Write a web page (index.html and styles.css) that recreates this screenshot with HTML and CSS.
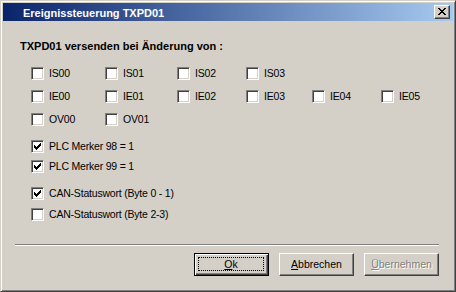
FILE: index.html
```html
<!DOCTYPE html>
<html lang="de">
<head>
<meta charset="utf-8">
<title>Ereignissteuerung TXPD01</title>
<link rel="stylesheet" href="styles.css">
</head>
<body>
<div class="window">
  <div class="titlebar">
    <span class="title">Ereignissteuerung TXPD01</span>
    <span class="close"><svg width="8" height="7" viewBox="0 0 8 7" shape-rendering="crispEdges"><path fill="#000" d="M0 0h2v1h-2z M6 0h2v1h-2z M1 1h2v1h-2z M5 1h2v1h-2z M2 2h4v1h-4z M3 3h2v1h-2z M2 4h4v1h-4z M1 5h2v1h-2z M5 5h2v1h-2z M0 6h2v1h-2z M6 6h2v1h-2z"/></svg></span>
  </div>
  <div class="content">
    <div class="heading">TXPD01 versenden bei Änderung von :</div>
    <div class="grid">
      <label class="item"><span class="cb"></span><span class="lbl">IS00</span></label>
      <label class="item"><span class="cb"></span><span class="lbl">IS01</span></label>
      <label class="item"><span class="cb"></span><span class="lbl">IS02</span></label>
      <label class="item"><span class="cb"></span><span class="lbl">IS03</span></label>
      <span></span><span></span>
      <label class="item"><span class="cb"></span><span class="lbl">IE00</span></label>
      <label class="item"><span class="cb"></span><span class="lbl">IE01</span></label>
      <label class="item"><span class="cb"></span><span class="lbl">IE02</span></label>
      <label class="item"><span class="cb"></span><span class="lbl">IE03</span></label>
      <label class="item"><span class="cb"></span><span class="lbl">IE04</span></label>
      <label class="item"><span class="cb"></span><span class="lbl">IE05</span></label>
      <label class="item"><span class="cb"></span><span class="lbl">OV00</span></label>
      <label class="item"><span class="cb"></span><span class="lbl">OV01</span></label>
    </div>
    <div class="list">
      <label class="item plc1"><span class="cb"><svg width="7" height="7" viewBox="0 0 7 7" shape-rendering="crispEdges"><path fill="#000" d="M0 2h1v3h-1z M1 3h1v3h-1z M2 4h1v3h-1z M3 3h1v3h-1z M4 2h1v3h-1z M5 1h1v3h-1z M6 0h1v3h-1z"/></svg></span><span class="lbl">PLC Merker 98 = 1</span></label>
      <label class="item plc2"><span class="cb"><svg width="7" height="7" viewBox="0 0 7 7" shape-rendering="crispEdges"><path fill="#000" d="M0 2h1v3h-1z M1 3h1v3h-1z M2 4h1v3h-1z M3 3h1v3h-1z M4 2h1v3h-1z M5 1h1v3h-1z M6 0h1v3h-1z"/></svg></span><span class="lbl">PLC Merker 99 = 1</span></label>
      <label class="item can1"><span class="cb"><svg width="7" height="7" viewBox="0 0 7 7" shape-rendering="crispEdges"><path fill="#000" d="M0 2h1v3h-1z M1 3h1v3h-1z M2 4h1v3h-1z M3 3h1v3h-1z M4 2h1v3h-1z M5 1h1v3h-1z M6 0h1v3h-1z"/></svg></span><span class="lbl">CAN-Statuswort (Byte 0 - 1)</span></label>
      <label class="item can2"><span class="cb"></span><span class="lbl">CAN-Statuswort (Byte 2-3)</span></label>
    </div>
    <div class="sep"></div>
    <div class="buttons">
      <span class="btn default"><span class="focus"><u>O</u>k</span></span>
      <span class="btn"><u>A</u>bbrechen</span>
      <span class="btn disabled"><u>Ü</u>bernehmen</span>
    </div>
  </div>
</div>
</body>
</html>
```
FILE: styles.css
```css
html, body {
  margin: 0;
  padding: 0;
}
body {
  background: #d4d0c8;
  font-family: "Liberation Sans", Arial, sans-serif;
  font-size: 10.5px;
  color: #000;
}
.window {
  width: 456px;
  height: 292px;
  box-sizing: border-box;
  border: 1px solid;
  border-color: #d4d0c8 #404040 #404040 #d4d0c8;
  box-shadow: inset 1px 1px #fff, inset -1px -1px #808080;
  padding: 2px;
  background: #d4d0c8;
}
.titlebar {
  height: 18px;
  display: flex;
  align-items: center;
  justify-content: space-between;
  background: linear-gradient(to right, #0a246a, #a6caf0);
  padding: 0 3px 0 20px;
}
.title {
  color: #fff;
  font-weight: bold;
  font-size: 11px;
  line-height: 18px;
  padding-top: 1px;
}
.close {
  width: 16px;
  height: 14px;
  box-sizing: border-box;
  border: 1px solid;
  border-color: #fff #404040 #404040 #fff;
  box-shadow: inset -1px -1px #808080;
  background: #d4d0c8;
  display: flex;
  align-items: center;
  justify-content: center;
  padding: 0 1px 1px 0;
}
.close svg { display: block; }
.content {
  padding: 19px 14px 0 12px;
}
.heading {
  font-weight: bold;
  font-size: 11px;
  line-height: 13px;
  padding-left: 5px;
}
.grid {
  display: grid;
  grid-template-columns: 74px 72px 69px 66px 69px auto;
  row-gap: 10px;
  margin: 14px 0 0 16px;
}
.item {
  display: flex;
  align-items: center;
  height: 13px;
}
.cb {
  width: 13px;
  height: 13px;
  box-sizing: border-box;
  border: 1px solid;
  border-color: #808080 #fff #fff #808080;
  box-shadow: inset 1px 1px #404040, inset -1px -1px #d4d0c8;
  background: #fff;
  padding: 2px 0 0 2px;
  flex: none;
}
.cb svg { display: block; }
.lbl {
  margin-left: 5px;
  line-height: 13px;
  letter-spacing: -0.2px;
  white-space: nowrap;
}
.list {
  margin: 14px 0 0 16px;
}
.plc2 { margin-top: 7px; }
.can1 { margin-top: 14px; }
.can2 { margin-top: 8px; }
.sep {
  margin-top: 23px;
  height: 1px;
  border-top: 1px solid #808080;
  border-bottom: 1px solid #fff;
  height: 0;
}
.buttons {
  display: flex;
  justify-content: flex-end;
  gap: 10px;
  margin-top: 7px;
}
.btn {
  width: 75px;
  height: 23px;
  box-sizing: border-box;
  border: 1px solid;
  border-color: #fff #404040 #404040 #fff;
  box-shadow: inset -1px -1px #808080;
  display: flex;
  align-items: center;
  justify-content: center;
  line-height: 13px;
  padding-bottom: 1px;
}
.btn.default {
  border-color: #000;
  box-shadow: inset 1px 1px #fff, inset -1px -1px #404040, inset -2px -2px #808080;
  padding: 3px 4px 4px 3px;
}
.focus {
  flex: 1;
  align-self: stretch;
  border: 1px dotted #000;
  display: flex;
  align-items: center;
  justify-content: center;
}
.btn.disabled {
  color: #808080;
  text-shadow: 1px 1px #fff;
}
u {
  text-decoration: underline;
  text-underline-offset: 1px;
}
```
